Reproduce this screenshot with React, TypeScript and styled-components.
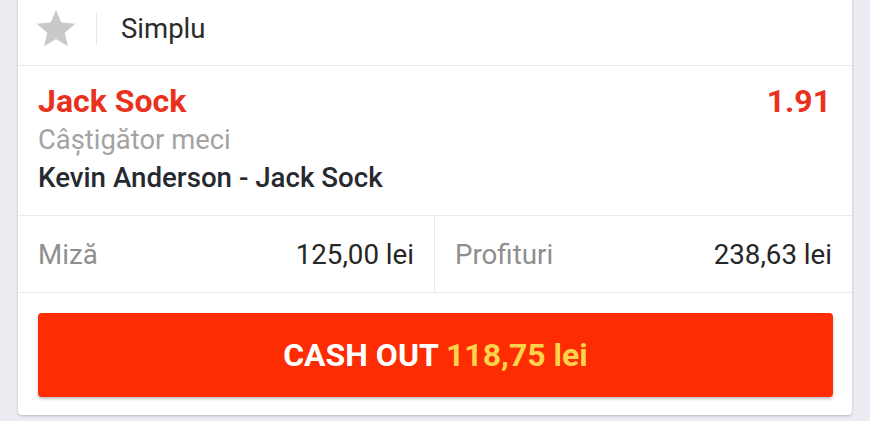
import React from "react";
import styled, { createGlobalStyle } from "styled-components";

const GlobalStyle = createGlobalStyle`
  html, body {
    margin: 0;
    padding: 0;
    background: #ececf2;
    font-family: Roboto, "Noto Sans", Arial, sans-serif;
    -webkit-font-smoothing: antialiased;
  }
  #root {
    overflow: hidden;
    height: 421px;
  }
`;

const Card = styled.div`
  margin: -6px 18px 0 18px;
  background: #ffffff;
  border-radius: 4px;
  box-shadow: 0 1px 3px rgba(0, 0, 0, 0.22);
  padding-top: 6px;
  display: flex;
  flex-direction: column;
`;

const Header = styled.div`
  display: flex;
  align-items: center;
  height: 57px;
  padding: 0 0 8px 15px;
  border-bottom: 1px solid #e9e9ee;
`;

const StarIcon = styled.svg`
  width: 46px;
  height: 46px;
  fill: #c9c9c9;
  flex: none;
`;

const VDivider = styled.div`
  width: 1px;
  height: 31px;
  background: #e6e6ea;
  margin-left: 17px;
  margin-right: 24px;
`;

const HeaderTitle = styled.span`
  font-size: 27.5px;
  color: #2b2b2b;
  line-height: 1;
`;

const Selection = styled.div`
  display: flex;
  justify-content: space-between;
  align-items: flex-start;
  padding: 17px 21px 0 20px;
  height: 132px;
  border-bottom: 1px solid #e9e9ee;
`;

const SelectionInfo = styled.div`
  display: flex;
  flex-direction: column;
`;

const Pick = styled.div`
  font-size: 32px;
  font-weight: 700;
  color: #e8321e;
  line-height: 36px;
`;

const Market = styled.div`
  font-size: 27.4px;
  color: #a3a3a3;
  line-height: 43px;
`;

const Event = styled.div`
  font-size: 27.7px;
  font-weight: 500;
  color: #262a30;
  line-height: 32px;
`;

const Odds = styled.div`
  font-size: 32px;
  font-weight: 700;
  color: #e8321e;
  line-height: 36px;
`;

const Stakes = styled.div`
  display: grid;
  grid-template-columns: 1fr 1fr;
  height: 76px;
  border-bottom: 1px solid #e9e9ee;
`;

const StakeCell = styled.div<{ $first?: boolean }>`
  display: flex;
  align-items: center;
  justify-content: space-between;
  padding: 0 20px;
  border-right: ${(p) => (p.$first ? "1px solid #e9e9ee" : "none")};
`;

const StakeLabel = styled.span`
  font-size: 27.7px;
  color: #8f8f8f;
`;

const StakeValue = styled.span`
  font-size: 27.7px;
  color: #262626;
`;

const ButtonArea = styled.div`
  padding: 20px 19px 18px 20px;
`;

const CashOutButton = styled.button`
  width: 100%;
  height: 84px;
  border: none;
  border-radius: 4px;
  background: #fd2c02;
  box-shadow: 0 2px 3px rgba(0, 0, 0, 0.25);
  display: flex;
  align-items: center;
  justify-content: center;
  cursor: pointer;
  padding: 0;
`;

const ButtonText = styled.span`
  display: inline-block;
  font-family: Roboto, sans-serif;
  font-size: 32px;
  font-weight: 700;
  color: #ffffff;
  white-space: nowrap;
`;

const Amount = styled.span`
  color: #fbd34c;
`;

export default function App() {
  return (
    <>
      <GlobalStyle />
      <Card>
        <Header>
          <StarIcon viewBox="0 0 24 24">
            <path d="M12 17.27L18.18 21l-1.64-7.03L22 9.24l-7.19-.61L12 2 9.19 8.63 2 9.24l5.46 4.73L5.82 21z" />
          </StarIcon>
          <VDivider />
          <HeaderTitle>Simplu</HeaderTitle>
        </Header>
        <Selection>
          <SelectionInfo>
            <Pick>Jack Sock</Pick>
            <Market>Câștigător meci</Market>
            <Event>Kevin Anderson - Jack Sock</Event>
          </SelectionInfo>
          <Odds>1.91</Odds>
        </Selection>
        <Stakes>
          <StakeCell $first>
            <StakeLabel>Miză</StakeLabel>
            <StakeValue>125,00 lei</StakeValue>
          </StakeCell>
          <StakeCell>
            <StakeLabel>Profituri</StakeLabel>
            <StakeValue>238,63 lei</StakeValue>
          </StakeCell>
        </Stakes>
        <ButtonArea>
          <CashOutButton>
            <ButtonText>
              CASH OUT <Amount>118,75 lei</Amount>
            </ButtonText>
          </CashOutButton>
        </ButtonArea>
      </Card>
    </>
  );
}
